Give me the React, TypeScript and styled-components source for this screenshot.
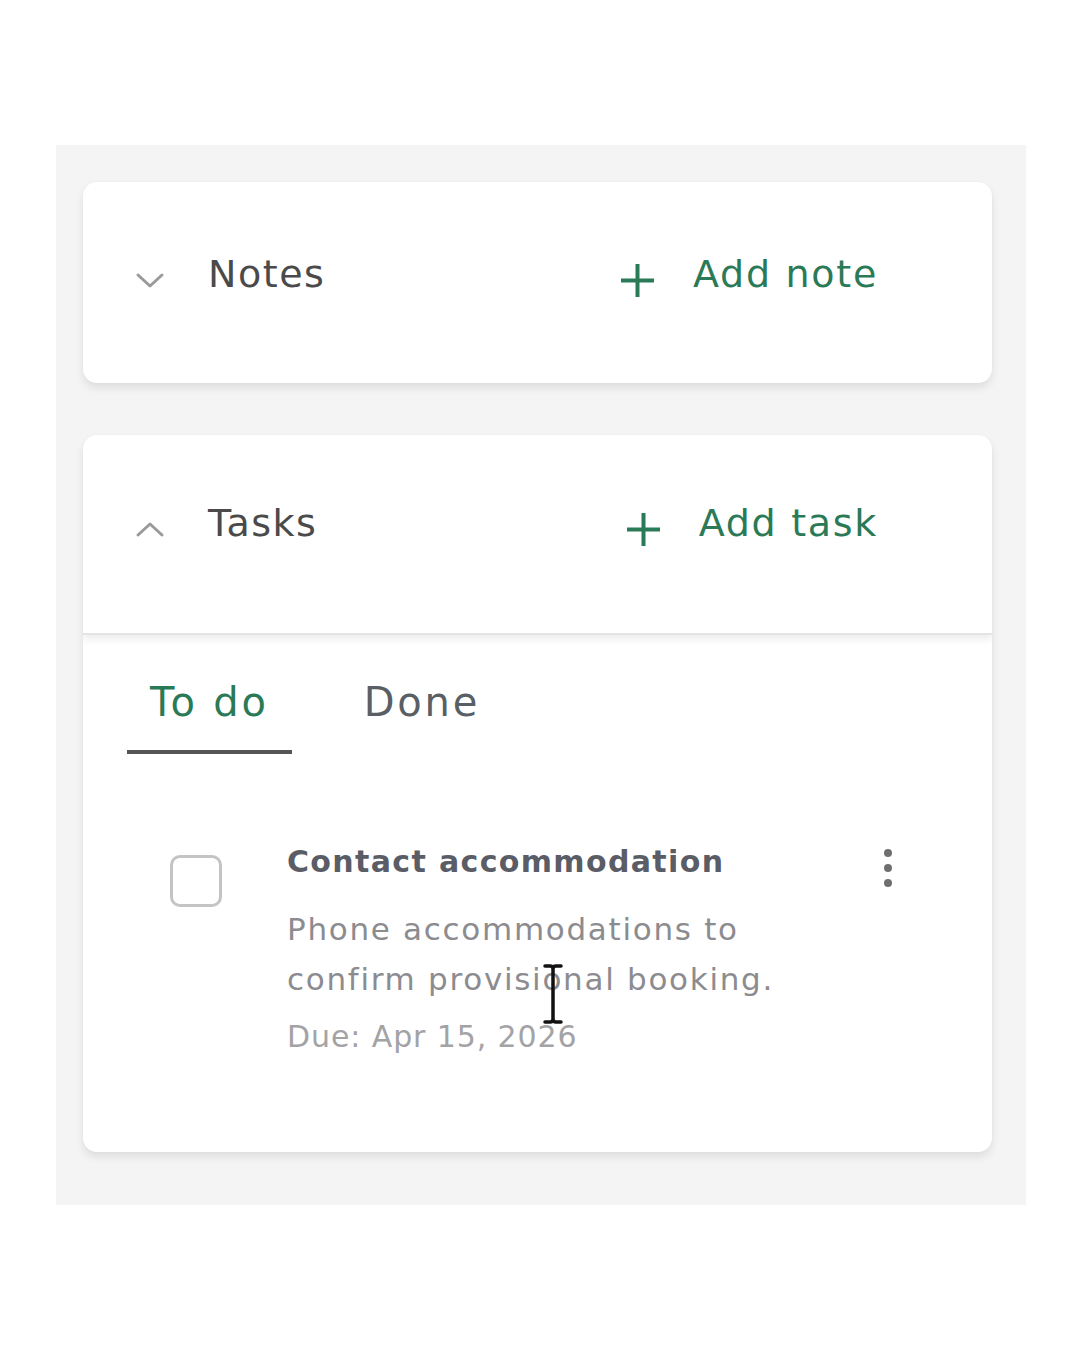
import React from "react";
import styled, { createGlobalStyle } from "styled-components";

const GlobalStyle = createGlobalStyle`
  html, body { margin: 0; padding: 0; background: #ffffff; }
  body { font-family: "DejaVu Sans", "Open Sans", sans-serif; }
  * { box-sizing: border-box; }
`;

const ACCENT = "#2b7a57";

const Panel = styled.div`
  margin: 145px 0 0 56px;
  width: 970px;
  height: 1060px;
  background: #f4f4f4;
  padding: 37px 34px 0 27px;
  display: flex;
  flex-direction: column;
  gap: 52px;
`;

const Card = styled.section<{ $height: number }>`
  background: #ffffff;
  border-radius: 14px;
  height: ${(p) => p.$height}px;
  box-shadow: 0 5px 9px rgba(0, 0, 0, 0.09), 0 0 2px rgba(0, 0, 0, 0.04);
  display: flex;
  flex-direction: column;
  overflow: hidden;
`;

const Header = styled.div<{ $height: number; $shift: number; $divider?: boolean }>`
  height: ${(p) => p.$height}px;
  flex: none;
  display: flex;
  align-items: center;
  padding: 0 114px ${(p) => p.$shift}px 52px;
  ${(p) =>
    p.$divider
      ? `border-bottom: 2px solid #e4e4e4; box-shadow: 0 4px 8px rgba(0,0,0,0.08);`
      : ""}
  position: relative;
`;

const IconSlot = styled.span<{ $w: number }>`
  width: ${(p) => p.$w}px;
  display: flex;
  align-items: center;
  justify-content: center;
  margin-top: 12px;
  flex: none;
`;

const Title = styled.h2`
  margin: 0 0 0 43px;
  font-size: 38px;
  font-weight: 400;
  letter-spacing: 0.04em;
  color: #4a4a4a;
  flex: 1;
`;

const AddButton = styled.button`
  background: none;
  border: none;
  padding: 0;
  display: flex;
  align-items: center;
  gap: 37px;
  font-family: inherit;
  font-size: 38px;
  letter-spacing: 0.045em;
  color: ${ACCENT};
  cursor: pointer;
`;

const TabList = styled.div`
  display: flex;
  margin: 21px 0 0 44px;
  gap: 49px;
`;

const Tab = styled.div<{ $active?: boolean }>`
  padding: 22px 23px 24px;
  font-size: 40px;
  line-height: 48px;
  letter-spacing: 0.07em;
  color: ${(p) => (p.$active ? ACCENT : "#5a5f66")};
  border-bottom: 4px solid ${(p) => (p.$active ? "#555555" : "transparent")};
`;

const TaskItem = styled.div`
  display: flex;
  align-items: flex-start;
  margin-top: 88px;
  padding: 0 97px 0 87px;
  position: relative;
`;

const Checkbox = styled.span`
  width: 52px;
  height: 52px;
  border: 3px solid #c4c4c4;
  border-radius: 10px;
  margin-top: 13px;
  flex: none;
`;

const TaskBody = styled.div`
  margin-left: 65px;
  flex: 1;
`;

const TaskTitle = styled.div`
  font-size: 30px;
  line-height: 40px;
  font-weight: 700;
  letter-spacing: 0.045em;
  color: #5a5c66;
`;

const TaskDesc = styled.div`
  margin-top: 22px;
  max-width: 505px;
  font-size: 31px;
  line-height: 50px;
  letter-spacing: 0.055em;
  color: #8c8c90;
`;

const TaskDue = styled.div`
  margin-top: 13px;
  font-size: 30px;
  line-height: 40px;
  letter-spacing: 0.03em;
  color: #a3a3a6;
`;

const Kebab = styled.span`
  margin-top: 6px;
  width: 14px;
  display: flex;
  justify-content: center;
  flex: none;
`;

const CursorMark = styled.span`
  position: absolute;
  left: 459px;
  top: 121px;
  width: 22px;
  height: 62px;
  pointer-events: none;
`;

const Chevron = ({ up }: { up?: boolean }) => (
  <svg width="30" height="17" viewBox="0 0 30 17" fill="none">
    <path
      d={up ? "M3 14 L15 3 L27 14" : "M3 3 L15 14 L27 3"}
      stroke="#9a9a9a"
      strokeWidth="3"
      strokeLinecap="round"
      strokeLinejoin="round"
    />
  </svg>
);

const Plus = () => (
  <svg width="37" height="37" viewBox="0 0 37 37" fill="none">
    <path d="M18.5 2 V35 M2 18.5 H35" stroke={ACCENT} strokeWidth="4" />
  </svg>
);

const Dots = () => (
  <svg width="10" height="40" viewBox="0 0 10 40">
    <circle cx="5" cy="5" r="4" fill="#6f6f6f" />
    <circle cx="5" cy="20" r="4" fill="#6f6f6f" />
    <circle cx="5" cy="35" r="4" fill="#6f6f6f" />
  </svg>
);

const IBeam = () => (
  <svg width="22" height="62" viewBox="0 0 22 62" fill="none">
    <path
      d="M3 3 H8 Q11 3 11 6 Q11 3 14 3 H19 M11 6 V56 M3 59 H8 Q11 59 11 56 Q11 59 14 59 H19"
      stroke="#111"
      strokeWidth="3.5"
      strokeLinecap="round"
    />
  </svg>
);

export default function App() {
  return (
    <>
      <GlobalStyle />
      <Panel>
        <Card $height={201}>
          <Header $height={201} $shift={17}>
            <IconSlot $w={30}>
              <Chevron />
            </IconSlot>
            <Title>Notes</Title>
            <AddButton>
              <IconSlot $w={37}>
                <Plus />
              </IconSlot>
              Add note
            </AddButton>
          </Header>
        </Card>
        <Card $height={717}>
          <Header $height={200} $shift={22} $divider>
            <IconSlot $w={30}>
              <Chevron up />
            </IconSlot>
            <Title>Tasks</Title>
            <AddButton>
              <IconSlot $w={37}>
                <Plus />
              </IconSlot>
              Add task
            </AddButton>
          </Header>
          <TabList>
            <Tab $active>To do</Tab>
            <Tab>Done</Tab>
          </TabList>
          <TaskItem>
            <Checkbox />
            <TaskBody>
              <TaskTitle>Contact accommodation</TaskTitle>
              <TaskDesc>Phone accommodations to confirm provisional booking.</TaskDesc>
              <TaskDue>Due: Apr 15, 2026</TaskDue>
            </TaskBody>
            <Kebab>
              <Dots />
            </Kebab>
            <CursorMark>
              <IBeam />
            </CursorMark>
          </TaskItem>
        </Card>
      </Panel>
    </>
  );
}
